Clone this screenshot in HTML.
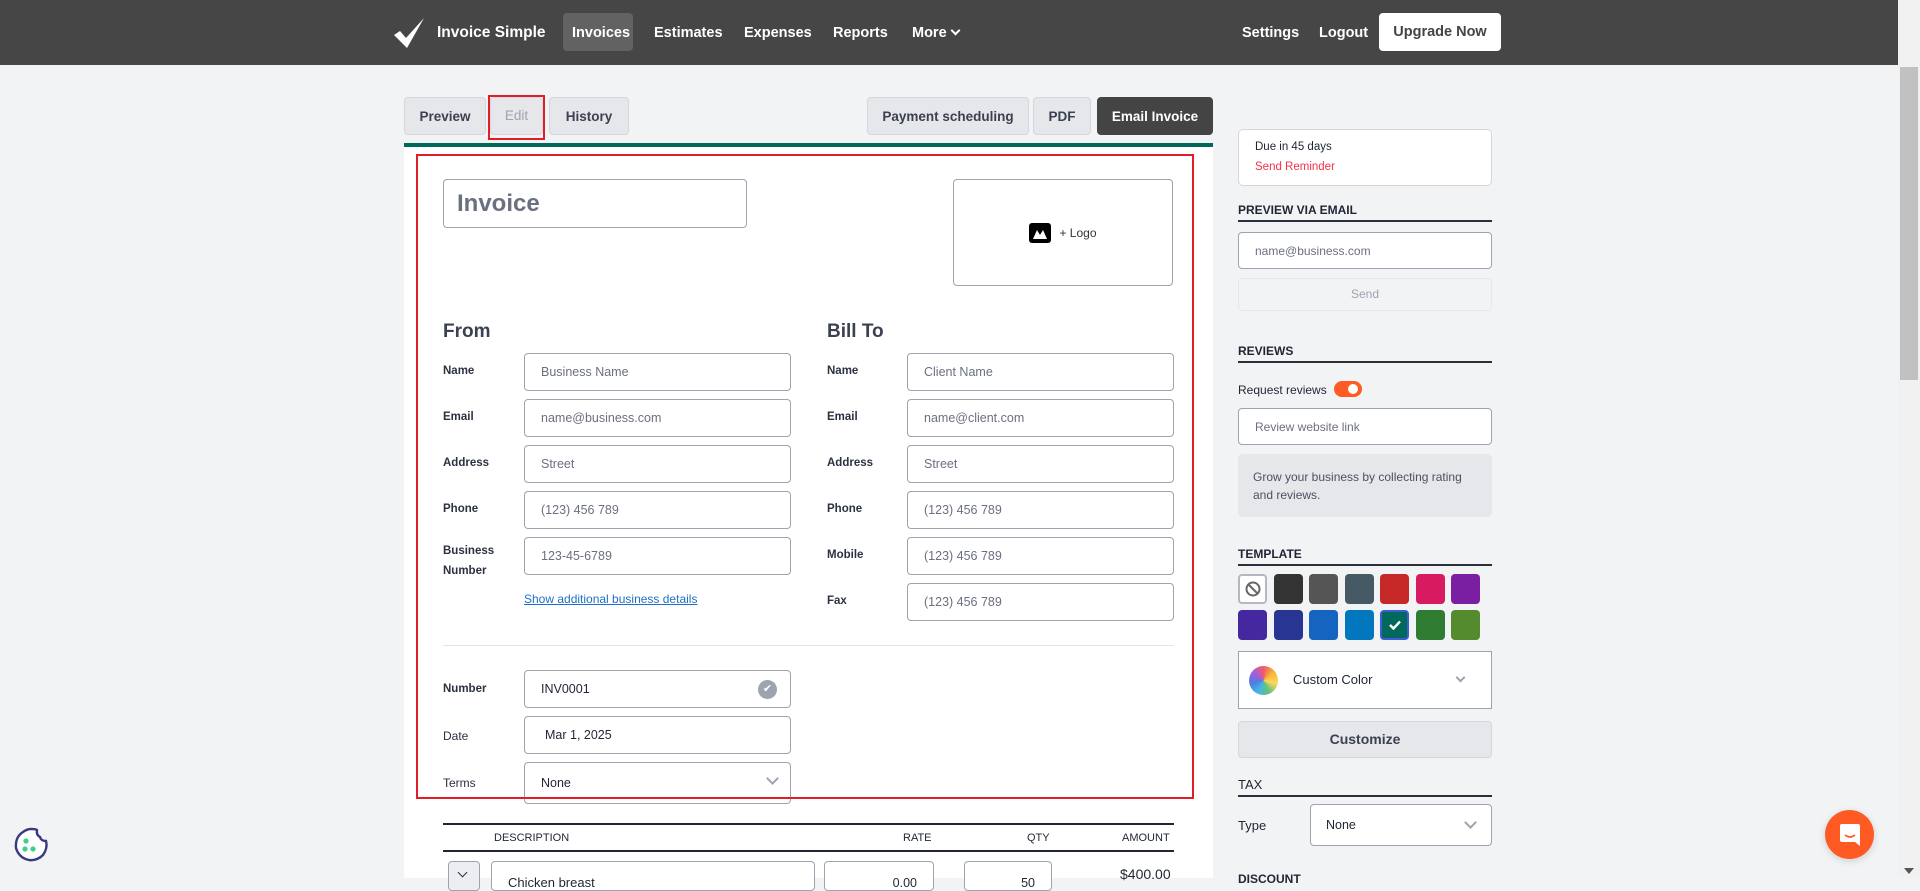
<!DOCTYPE html>
<html><head><meta charset="utf-8"><style>
*{box-sizing:border-box;margin:0;padding:0}
body{width:1920px;height:878px;overflow:hidden;background:#f2f3f5;font-family:"Liberation Sans",sans-serif;color:#1f2533;position:relative}
.a{position:absolute}
.nav{left:0;top:0;width:1898px;height:65px;background:#464646}
.nt{color:#fff;font-size:14.5px;font-weight:bold;top:25px}
.tab{top:97px;height:38px;background:#e5e7eb;border:1px solid #d4d6db;border-radius:4px;font-size:13.5px;font-weight:bold;color:#3b4150;display:flex;align-items:center;justify-content:center}
.inp{background:#fff;border:1px solid #9ea3b0;border-radius:4px;height:38px;font-size:12.5px;color:#6b7080;display:flex;align-items:center;padding-left:16px}
.lb{font-size:11.5px;font-weight:bold;color:#2b3140}
.sh{font-size:12px;font-weight:bold;color:#1f2533;left:1238px;width:254px;border-bottom:2px solid #2a2f3c;padding-bottom:3px}
.sw{width:29px;height:30px;border-radius:4px}
.chev{width:9px;height:9px;border-right:2px solid #9ea3b0;border-bottom:2px solid #9ea3b0;transform:rotate(45deg)}
</style></head><body>
<div class="a nav"></div>
<svg class="a" style="left:394px;top:18px" width="32" height="30" viewBox="0 0 32 30"><path d="M0 17 L6 13 L12 20 L30 0 L13 30 Z" fill="#fff"/></svg>
<div class="a nt" style="left:437px;font-size:15.5px;top:24px">Invoice Simple</div>
<div class="a" style="left:563px;top:13px;width:70px;height:38px;background:#626262;border-radius:4px"></div>
<div class="a nt" style="left:572px">Invoices</div>
<div class="a nt" style="left:654px">Estimates</div>
<div class="a nt" style="left:744px">Expenses</div>
<div class="a nt" style="left:833px">Reports</div>
<div class="a nt" style="left:912px">More</div>
<div class="a" style="left:952px;top:27px;width:7px;height:7px;border-right:2px solid #fff;border-bottom:2px solid #fff;transform:rotate(45deg)"></div>
<div class="a nt" style="left:1242px">Settings</div>
<div class="a nt" style="left:1319px">Logout</div>
<div class="a" style="left:1379px;top:13px;width:122px;height:38px;background:#fff;border-radius:4px;font-size:14.5px;font-weight:bold;color:#444;display:flex;align-items:center;justify-content:center">Upgrade Now</div>
<div class="a" style="left:1898px;top:0;width:22px;height:878px;background:#f1f1f1"></div>
<div class="a" style="left:1900px;top:67px;width:18px;height:313px;background:#c1c1c1"></div>
<div class="a" style="left:1904px;top:868px;border:5px solid transparent;border-top:6px solid #555"></div>

<div class="a tab" style="left:404px;width:82px">Preview</div>
<div class="a tab" style="left:490px;width:53px;color:#a0a4ad;font-weight:normal"></div>
<div class="a" style="left:488px;top:95px;width:57px;height:45px;border:2px solid #e11d2a;font-size:13.5px;color:#a0a4ad;display:flex;align-items:center;justify-content:center;padding-bottom:5px">Edit</div>
<div class="a tab" style="left:549px;width:80px">History</div>
<div class="a tab" style="left:867px;width:162px">Payment scheduling</div>
<div class="a tab" style="left:1033px;width:58px">PDF</div>
<div class="a tab" style="left:1097px;width:116px;background:#444;border-color:#444;color:#fff">Email Invoice</div>
<div class="a" style="left:404px;top:143px;width:809px;height:4px;background:#00695c"></div>
<div class="a" style="left:404px;top:147px;width:809px;height:731px;background:#fff"></div>
<div class="a" style="left:416px;top:154px;width:778px;height:645px;border:2px solid #e11d2a;z-index:3"></div>

<div class="a inp" style="left:443px;top:179px;width:304px;height:49px;font-size:24px;font-weight:bold;color:#6b7080;padding-left:13px">Invoice</div>
<div class="a" style="left:953px;top:179px;width:220px;height:107px;border:1px solid #9ea3b0;border-radius:4px;display:flex;align-items:center;justify-content:center;font-size:12px;color:#333"><span style="display:inline-block;width:22px;height:20px;background:#000;border-radius:3px;margin-right:8px;position:relative"><svg width="22" height="20" viewBox="0 0 22 20"><path d="M4 16 L8 7 L11 12 L14 7 L18 16 Z" fill="#fff"/></svg></span>+ Logo</div>

<div class="a" style="left:443px;top:321px;font-size:19px;font-weight:bold;color:#3b4150">From</div>
<div class="a" style="left:827px;top:321px;font-size:19px;font-weight:bold;color:#3b4150">Bill To</div>

<div class="a lb" style="left:443px;top:365px">Name</div>
<div class="a lb" style="left:443px;top:411px">Email</div>
<div class="a lb" style="left:443px;top:457px">Address</div>
<div class="a lb" style="left:443px;top:503px">Phone</div>
<div class="a lb" style="left:443px;top:541px;line-height:20px">Business<br>Number</div>
<div class="a inp" style="left:524px;top:353px;width:267px">Business Name</div>
<div class="a inp" style="left:524px;top:399px;width:267px">name@business.com</div>
<div class="a inp" style="left:524px;top:445px;width:267px">Street</div>
<div class="a inp" style="left:524px;top:491px;width:267px">(123) 456 789</div>
<div class="a inp" style="left:524px;top:537px;width:267px">123-45-6789</div>
<div class="a" style="left:524px;top:592px;font-size:12px;color:#1d6fc7;text-decoration:underline">Show additional business details</div>

<div class="a lb" style="left:827px;top:365px">Name</div>
<div class="a lb" style="left:827px;top:411px">Email</div>
<div class="a lb" style="left:827px;top:457px">Address</div>
<div class="a lb" style="left:827px;top:503px">Phone</div>
<div class="a lb" style="left:827px;top:549px">Mobile</div>
<div class="a lb" style="left:827px;top:595px">Fax</div>
<div class="a inp" style="left:907px;top:353px;width:267px">Client Name</div>
<div class="a inp" style="left:907px;top:399px;width:267px">name@client.com</div>
<div class="a inp" style="left:907px;top:445px;width:267px">Street</div>
<div class="a inp" style="left:907px;top:491px;width:267px">(123) 456 789</div>
<div class="a inp" style="left:907px;top:537px;width:267px">(123) 456 789</div>
<div class="a inp" style="left:907px;top:583px;width:267px">(123) 456 789</div>

<div class="a" style="left:443px;top:645px;width:731px;height:1px;background:#e3e5e8"></div>
<div class="a lb" style="left:443px;top:683px">Number</div>
<div class="a" style="left:443px;top:729px;font-size:12px;color:#2b3140">Date</div>
<div class="a" style="left:443px;top:776px;font-size:12px;color:#2b3140">Terms</div>
<div class="a inp" style="left:524px;top:670px;width:267px;color:#1f2533">INV0001</div>
<div class="a" style="left:758px;top:680px;width:19px;height:19px;border-radius:50%;background:#9ea3b0;color:#fff;font-size:11px;text-align:center;line-height:19px">✔</div>
<div class="a inp" style="left:524px;top:716px;width:267px;color:#1f2533;padding-left:20px">Mar 1, 2025</div>
<div class="a inp" style="left:524px;top:762px;width:267px;height:42px;color:#1f2533;align-items:flex-start;padding-top:13px">None</div>
<div class="a chev" style="left:768px;top:774px"></div>

<div class="a" style="left:443px;top:823px;width:731px;height:2px;background:#1f2533"></div>
<div class="a" style="left:494px;top:832px;font-size:11px;color:#1f2533">DESCRIPTION</div>
<div class="a" style="left:903px;top:832px;font-size:11px;color:#1f2533">RATE</div>
<div class="a" style="left:1027px;top:832px;font-size:11px;color:#1f2533">QTY</div>
<div class="a" style="left:1122px;top:832px;font-size:11px;color:#1f2533">AMOUNT</div>
<div class="a" style="left:443px;top:850px;width:731px;height:2px;background:#1f2533"></div>
<div class="a" style="left:448px;top:861px;width:32px;height:30px;border:1px solid #9ea3b0;border-radius:4px;background:#eceef1"></div>
<div class="a" style="left:459px;top:869px;width:7px;height:7px;border-right:1.5px solid #333;border-bottom:1.5px solid #333;transform:rotate(45deg)"></div>
<div class="a inp" style="left:491px;top:861px;width:324px;height:30px;align-items:flex-end;color:#1f2533;font-size:13px">Chicken breast</div>
<div class="a inp" style="left:824px;top:861px;width:110px;height:30px;justify-content:flex-end;padding-right:16px;align-items:flex-end;color:#1f2533">0.00</div>
<div class="a inp" style="left:964px;top:861px;width:88px;height:30px;justify-content:flex-end;padding-right:16px;align-items:flex-end;color:#1f2533">50</div>
<div class="a" style="left:1120px;top:866px;font-size:14px">$400.00</div>

<!-- sidebar -->
<div class="a" style="left:1238px;top:129px;width:254px;height:57px;background:#fff;border:1px solid #d4d6db;border-radius:5px"></div>
<div class="a" style="left:1255px;top:141px;font-size:11.5px">Due in 45 days</div>
<div class="a" style="left:1255px;top:161px;font-size:11.5px;color:#f0334b">Send Reminder</div>
<div class="a sh" style="top:203px">PREVIEW VIA EMAIL</div>
<div class="a inp" style="left:1238px;top:232px;width:254px;height:37px;font-size:12px">name@business.com</div>
<div class="a" style="left:1238px;top:278px;width:254px;height:33px;border:1px solid #e5e7eb;border-radius:4px;background:#f2f3f5;text-align:center;line-height:31px;font-size:12px;color:#9ea3b0">Send</div>
<div class="a sh" style="top:344px">REVIEWS</div>
<div class="a" style="left:1238px;top:383px;font-size:12px">Request reviews</div>
<div class="a" style="left:1334px;top:381px;width:28px;height:16px;border-radius:8px;background:#ff5a23"><div class="a" style="left:14px;top:3px;width:10px;height:10px;border-radius:50%;background:#fff"></div></div>
<div class="a inp" style="left:1238px;top:408px;width:254px;height:37px;font-size:12px">Review website link</div>
<div class="a" style="left:1238px;top:454px;width:254px;height:63px;background:#e5e7eb;border-radius:5px;padding:14px 15px;font-size:12px;line-height:18px;color:#4b5160">Grow your business by collecting rating and reviews.</div>
<div class="a sh" style="top:547px">TEMPLATE</div>
<div class="a sw" style="left:1238px;top:574px;background:#fff;border:2px solid #b5b8c0"></div>
<svg class="a" style="left:1244px;top:580px" width="18" height="18" viewBox="0 0 18 18"><circle cx="9" cy="9" r="6.5" fill="none" stroke="#666" stroke-width="2"/><path d="M4.5 4.5 L13.5 13.5" stroke="#666" stroke-width="2"/></svg>
<div class="a sw" style="left:1274px;top:574px;background:#333"></div>
<div class="a sw" style="left:1309px;top:574px;background:#555"></div>
<div class="a sw" style="left:1345px;top:574px;background:#455a64"></div>
<div class="a sw" style="left:1380px;top:574px;background:#c62828"></div>
<div class="a sw" style="left:1416px;top:574px;background:#d81b60"></div>
<div class="a sw" style="left:1451px;top:574px;background:#7b1fa2"></div>
<div class="a sw" style="left:1238px;top:610px;background:#4527a0"></div>
<div class="a sw" style="left:1274px;top:610px;background:#283593"></div>
<div class="a sw" style="left:1309px;top:610px;background:#1565c0"></div>
<div class="a sw" style="left:1345px;top:610px;background:#0277bd"></div>
<div class="a sw" style="left:1380px;top:610px;background:#00695c;border:2px solid #3d5bd9"></div>
<svg class="a" style="left:1387px;top:617px" width="16" height="16" viewBox="0 0 16 16"><path d="M3 8 L6.5 11.5 L13 4.5" stroke="#fff" stroke-width="2.4" fill="none"/></svg>
<div class="a sw" style="left:1416px;top:610px;background:#2e7d32"></div>
<div class="a sw" style="left:1451px;top:610px;background:#558b2f"></div>
<div class="a" style="left:1238px;top:651px;width:254px;height:58px;background:#fff;border:1px solid #9ea3b0"></div>
<div class="a" style="left:1249px;top:666px;width:29px;height:29px;border-radius:50%;background:conic-gradient(#f05a6b,#f7b733,#ffd75e,#63c27a,#45b3e8,#4d7fe0,#a45de0,#f05a6b)"></div>
<div class="a" style="left:1293px;top:672px;font-size:13px">Custom Color</div>
<div class="a chev" style="left:1457px;top:674px;width:7px;height:7px"></div>
<div class="a" style="left:1238px;top:721px;width:254px;height:37px;background:#e5e7eb;border:1px solid #d4d6db;border-radius:4px;text-align:center;line-height:35px;font-size:14px;font-weight:bold;color:#3b4150">Customize</div>
<div class="a sh" style="top:777px;font-weight:normal;font-size:13px">TAX</div>
<div class="a" style="left:1238px;top:818px;font-size:13px">Type</div>
<div class="a inp" style="left:1310px;top:804px;width:182px;height:42px;color:#1f2533;padding-left:15px">None</div>
<div class="a chev" style="left:1466px;top:818px"></div>
<div class="a" style="left:1238px;top:872px;font-size:12px;font-weight:bold">DISCOUNT</div>

<div class="a" style="left:1825px;top:810px;width:49px;height:49px;border-radius:50%;background:#ff5a23;box-shadow:0 2px 8px rgba(0,0,0,.15)"></div>
<svg class="a" style="left:1838px;top:822px" width="24" height="26" viewBox="0 0 24 26"><path d="M4 2 H20 Q22 2 22 4 V24 L17 20 H4 Q2 20 2 18 V4 Q2 2 4 2 Z" fill="#fff"/><path d="M7 13 Q12 17 17 13" stroke="#ff5a23" stroke-width="1.6" fill="none"/></svg>
<svg class="a" style="left:12px;top:826px" width="38" height="38" viewBox="0 0 38 38"><path d="M19 3 Q24 3 25 4 Q24 9 28 11 Q29 15 34 15 Q36 22 31 29 Q25 35 17 34 Q7 32 4 22 Q3 11 11 6 Q15 3 19 3 Z" fill="#fff" stroke="#3a3a80" stroke-width="2.4"/><circle cx="14" cy="15" r="2.6" fill="#3ecf8e"/><circle cx="13" cy="23" r="2.6" fill="#3ecf8e"/><circle cx="21" cy="23" r="2.6" fill="#3ecf8e"/></svg>
</body></html>
